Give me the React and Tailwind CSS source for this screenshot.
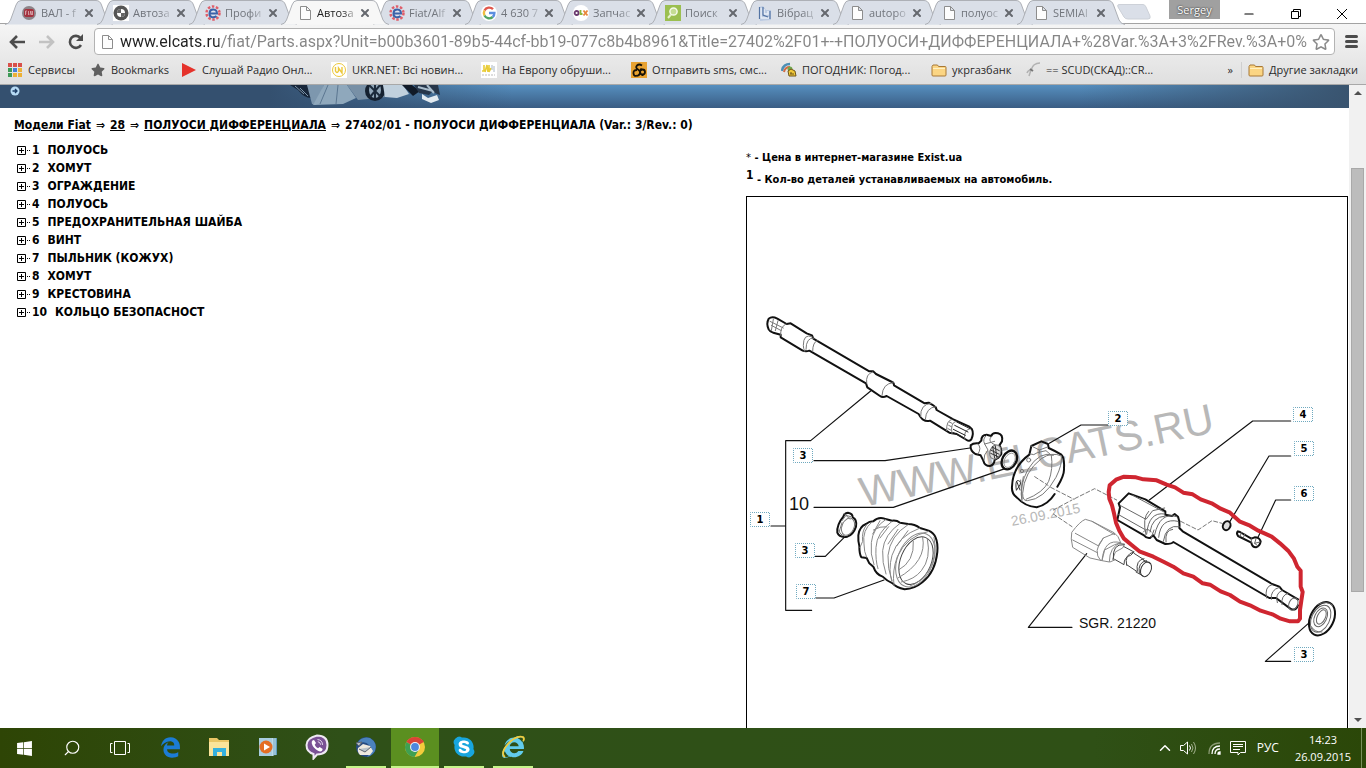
import React from 'react';
import { X, Minus, Search, ChevronUp } from 'lucide-react';
import { FaStar, FaRegStar, FaSkype, FaWindows, FaEdgeLegacy, FaInternetExplorer } from 'react-icons/fa';

const PageIcon = () => (
  <svg viewBox="0 0 16 16" className="size-4 shrink-0" fill="#fdfdfd" stroke="#8d8d8d">
    <path d="M3.500 1.500h6l4 4v9h-10zM9.500 1.500v4h4" />
  </svg>
);

const FiatIcon = () => (
  <svg viewBox="0 0 16 16" className="size-4 shrink-0">
    <circle cx="8" cy="8" r="7" fill="#8c8489" />
    <rect x="3" y="4" width="10" height="8" rx="2" fill="#a4323f" />
    <path d="M4.500 6v4M4.500 6h1.500M4.500 8h1M7.500 6v4M9 10l.8-4 .8 4M11.500 6v4" stroke="#e5c5c8" strokeWidth=".7" fill="none" />
  </svg>
);

const WheelIcon = () => (
  <svg viewBox="0 0 16 16" className="size-4 shrink-0">
    <rect width="16" height="16" fill="#fff" />
    <circle cx="8" cy="8" r="7.500" fill="#555" />
    <circle cx="8" cy="8" r="4" fill="#fff" />
    <path d="M8 8V4a4 4 0 0 0-4 4zM8 8v4a4 4 0 0 0 4-4z" fill="#666" />
  </svg>
);

const ExistIcon = () => (
  <svg viewBox="0 0 16 16" className="size-4 shrink-0" fill="none">
    <circle cx="8" cy="8" r="6.500" stroke="#df5e6a" strokeWidth="2.500" strokeDasharray="2.500 1.600" />
    <circle cx="8" cy="8" r="5" fill="#dfe3ee" />
    <path d="M4 8.500h8C12 3.500 5 3 4.500 8s4.500 5 7 3" stroke="#3a62a8" strokeWidth="2" />
  </svg>
);

const GoogleIcon = () => (
  <svg viewBox="0 0 16 16" className="size-4 shrink-0" fill="none" strokeWidth="2.400">
    <circle cx="8" cy="8" r="8" fill="#fff" />
    <path d="M12 4.200A5.300 5.300 0 0 0 3.500 5.500" stroke="#e0574c" />
    <path d="M3.500 5.500a5.300 5.300 0 0 0 0 5" stroke="#efbd41" />
    <path d="M3.500 10.500a5.300 5.300 0 0 0 8.200 1.500" stroke="#51a465" />
    <path d="M11.700 12a5.300 5.300 0 0 0 1.700-4H8" stroke="#5b8ee0" />
  </svg>
);

const OlxIcon = () => (
  <svg viewBox="0 0 16 16" className="size-4 shrink-0" fill="none" strokeWidth="1.800">
    <circle cx="8" cy="8" r="8" fill="#fff" />
    <circle cx="3.600" cy="8" r="2" stroke="#6b3b70" />
    <path d="M7.500 5v4h2" stroke="#8bb53c" />
    <path d="M10.500 5.500l4 5M14.500 5.500l-4 5" stroke="#e8853a" />
  </svg>
);

const FindIcon = () => (
  <svg viewBox="0 0 16 16" className="size-4 shrink-0">
    <rect width="16" height="16" fill="#9bbf50" />
    <circle cx="8.500" cy="6.500" r="3.600" fill="#c5dc93" stroke="#f5faea" strokeWidth="1.500" />
    <path d="M6 9.500L3 13" stroke="#e6f1cd" strokeWidth="2" />
  </svg>
);

const ForumIcon = () => (
  <svg viewBox="0 0 16 16" className="size-4 shrink-0">
    <path d="M2 2l4-1 3 4h5v10l-11 1z" fill="#bccbe2" />
    <path d="M4 3v10h8M7 4v5h4V6" stroke="#e9eff7" strokeWidth="1.500" fill="none" />
    <path d="M2.500 2v12M6 2v8l5 2M13 6v8" stroke="#5474a4" strokeWidth="1.200" fill="none" />
  </svg>
);

const FolderIcon = () => (
  <svg viewBox="0 0 16 16" className="size-4 shrink-0">
    <path d="M1 4.500L2 3h4.500l1 1.500h6.500q1 0 1 1v7.500q0 1-1 1H2q-1 0-1-1z" fill="#fbd583" stroke="#a87836" />
    <path d="M2 6.500h12" stroke="#fff0c2" />
  </svg>
);

const AppsIcon = () => (
  <svg viewBox="0 0 16 16" className="size-4 shrink-0">
    {['#d8504a', '#d8504a', '#d8504a', '#3f9a57', '#4580d6', '#edb136', '#3f9a57', '#edb136', '#edb136'].map((c, i) => (
      <rect key={i} x={(i % 3) * 5 + 1} y={Math.floor(i / 3) * 5 + 1} width="4" height="4" fill={c} />
    ))}
  </svg>
);

const tabs = [
  { title: 'ВАЛ - f', icon: <FiatIcon /> },
  { title: 'Автоза', icon: <WheelIcon /> },
  { title: 'Профи', icon: <ExistIcon /> },
  { title: 'Автоза', icon: <PageIcon />, active: true },
  { title: 'Fiat/Alf', icon: <ExistIcon /> },
  { title: '4 630 7', icon: <GoogleIcon /> },
  { title: 'Запчас', icon: <OlxIcon /> },
  { title: 'Поиск', icon: <FindIcon /> },
  { title: 'Вібрац', icon: <ForumIcon /> },
  { title: 'autopo', icon: <PageIcon /> },
  { title: 'полуос', icon: <PageIcon /> },
  { title: 'SEMIAl', icon: <PageIcon /> },
];

const Tab = ({ title, icon, active }) => (
  <div className={`relative -mr-4 h-[25px] w-[108px] shrink-0 ${active ? 'z-10' : ''}`}>
    <svg viewBox="0 0 108 25" className="absolute inset-0 h-full w-full">
      <path
        d="M0 24.500Q4 24 5.500 20L11 5Q12.500.5 16 .5H91Q95 .5 96.500 5L102 20Q104 24 108 24.500"
        fill={active ? '#f7f7f7' : '#dadfe8'}
        stroke="#adb0b6"
      />
    </svg>
    <div className="relative flex h-[25px] items-center pl-4">
      {icon}
      <button
        className={`ml-1 w-[42px] text-left text-[11px] leading-5 whitespace-nowrap [mask-image:linear-gradient(to_right,black_60%,transparent)] ${active ? 'text-[#222]' : 'text-[#70747b]'}`}
      >
        {title}
      </button>
      <button aria-label="Закрыть вкладку">
        <X size={12} strokeWidth={4} color="#66696f" />
      </button>
    </div>
  </div>
);

const TabStrip = () => (
  <div className="flex h-[24px] border-b border-[#a3a3a3] bg-white pl-[5px]">
    {tabs.map((tab, i) => (
      <Tab key={i} {...tab} />
    ))}
    <button aria-label="Новая вкладка" className="ml-2 h-6 shrink-0">
      <svg viewBox="0 0 34 18" className="h-[18px] w-[34px]">
        <path d="M2 1.500H26Q28 1.500 29 4l4 9q1 3-2 3H11q-3 0-4-2L1 4Q0 1.500 2 1.500z" fill="#dadfe8" stroke="#cdd1d8" />
      </svg>
    </button>
    <div className="ml-auto flex">
      <button className="mr-[22px] h-[19px] w-[51px] bg-[#a0a0a0] text-[11px] leading-4 text-white [text-shadow:0_0_2px_black]">Sergey</button>
      <button aria-label="Свернуть" className="mr-[34px] pt-1">
        <Minus size={14} strokeWidth={2} color="#000" />
      </button>
      <button aria-label="Восстановить" className="mr-[34px] pt-1">
        <svg viewBox="0 0 12 12" className="size-3" fill="none" stroke="#000">
          <path d="M1.500 3.500h7v7h-7zM3.500 3.500v-2h7v7h-2" />
        </svg>
      </button>
      <button aria-label="Закрыть" className="mr-[18px] pt-1">
        <svg viewBox="0 0 12 12" className="size-3" stroke="#000">
          <path d="M1 1l10 10M11 1L1 11" />
        </svg>
      </button>
    </div>
  </div>
);

const Toolbar = () => (
  <div className="flex h-[35px] items-center pr-2 pl-2">
    <button aria-label="Назад" className="mr-[12px]">
      <svg viewBox="0 0 18 16" className="h-4 w-[18px]" fill="none" stroke="#4c4c4c" strokeWidth="2.600">
        <path d="M17 8H3M9 2L3 8l6 6" />
      </svg>
    </button>
    <button aria-label="Вперёд" className="mr-[12px]">
      <svg viewBox="0 0 18 16" className="h-4 w-[18px]" fill="none" stroke="#c2c2c2" strokeWidth="2.600">
        <path d="M1 8h14M9 2l6 6-6 6" />
      </svg>
    </button>
    <button aria-label="Обновить" className="mr-[10px]">
      <svg viewBox="0 0 16 16" className="size-4" fill="none" stroke="#4c4c4c" strokeWidth="2.600">
        <path d="M13 11A6 6 0 1 1 12.500 4" />
        <path d="M15 0v7H8z" fill="#4c4c4c" stroke="none" />
      </svg>
    </button>
    <div className="flex h-[27px] min-w-0 flex-1 items-center rounded-sm border border-[#b3b3b3] bg-white pr-1 pl-1">
      <PageIcon />
      <input
        aria-label="Адрес"
        readOnly
        className="ml-[5px] min-w-0 flex-1 bg-[linear-gradient(to_right,#222_99px,#858585_99px)] bg-clip-text font-['Roboto','Open_Sans',sans-serif] text-base text-transparent outline-none"
        defaultValue="www.elcats.ru/fiat/Parts.aspx?Unit=b00b3601-89b5-44cf-bb19-077c8b4b8961&Title=27402%2F01+-+ПОЛУОСИ+ДИФФЕРЕНЦИАЛА+%28Var.%3A+3%2FRev.%3A+0%"
      />
      <button aria-label="В закладки">
        <FaRegStar size={18} color="#8a8a8a" />
      </button>
    </div>
    <button aria-label="Меню" className="ml-[10px] flex w-[13px] flex-col gap-[2px]">
      <span className="h-[3px] rounded-sm bg-[#4c4c4c]" />
      <span className="h-[3px] rounded-sm bg-[#4c4c4c]" />
      <span className="h-[3px] rounded-sm bg-[#4c4c4c]" />
    </button>
  </div>
);

const bookmarks = [
  { title: 'Сервисы', width: 'w-[83px]', icon: <AppsIcon /> },
  { title: 'Bookmarks', width: 'w-[91px]', icon: <FaStar size={14} color="#606060" className="mx-px shrink-0" /> },
  {
    title: 'Слушай Радио Онл...',
    width: 'w-[150px]',
    icon: (
      <svg viewBox="0 0 16 16" className="size-4 shrink-0">
        <path d="M1 1l14 7-14 7z" fill="#e5322b" />
      </svg>
    ),
  },
  {
    title: 'UKR.NET: Всі новин...',
    width: 'w-[150px]',
    icon: (
      <svg viewBox="0 0 16 16" className="size-4 shrink-0" fill="none" stroke="#ecc83c">
        <rect width="16" height="16" fill="#fff" stroke="none" />
        <circle cx="8" cy="8" r="6.500" />
        <path d="M4.500 5v4q1.500 3 3 0V6l3.500 5V5" strokeWidth="1.400" />
      </svg>
    ),
  },
  {
    title: 'На Европу обруши...',
    width: 'w-[150px]',
    icon: (
      <svg viewBox="0 0 16 16" className="size-4 shrink-0" fill="none" stroke="#e9cc36" strokeWidth="1.600">
        <rect width="16" height="16" fill="#fff" stroke="none" />
        <path d="M1 9h2V3M4 10l2-7 1 7M8 3v7l2-4" />
        <path d="M11 3v5M13 4v6" stroke="#a6b5c4" strokeWidth="1" />
        <path d="M1 13h13" stroke="#bbb" strokeDasharray="2 1" strokeWidth="1" />
      </svg>
    ),
  },
  {
    title: 'Отправить sms, смс...',
    width: 'w-[150px]',
    icon: (
      <svg viewBox="0 0 16 16" className="size-4 shrink-0" fill="none" stroke="#171208" strokeWidth="1.800">
        <rect width="16" height="16" fill="#e8a231" stroke="none" />
        <path d="M11 3.500Q8 1.500 6 3.500t1 4 2 4-3 2.500M6 8Q2 8 2.500 11.500T6 13.500" />
        <circle cx="11.500" cy="10" r="2.500" />
        <path d="M9 7.500h2M11.500 12.500v1.500" />
      </svg>
    ),
  },
  {
    title: 'ПОГОДНИК: Погод...',
    width: 'w-[150px]',
    icon: (
      <svg viewBox="0 0 16 16" className="size-4 shrink-0" fill="none">
        <path d="M1 9Q2 2 9 2" stroke="#4d8fb5" strokeWidth="2.500" />
        <path d="M3 10q1-5 6-5" stroke="#d36a43" strokeWidth="2" />
        <circle cx="9" cy="7" r="2.500" fill="#70a84e" />
        <path d="M7 9l3-2 4 2 1 5H8z" fill="#f0c738" stroke="#6d541a" />
        <path d="M9 12h4M10 10v2" stroke="#6d541a" />
      </svg>
    ),
  },
  { title: 'укргазбанк', width: 'w-[94px]', icon: <FolderIcon /> },
  {
    title: '== SCUD(СКАД)::CR...',
    width: 'w-[150px]',
    icon: (
      <svg viewBox="0 0 16 16" className="size-4 shrink-0" fill="none" stroke="#b2b2b2" strokeWidth="1.500">
        <path d="M15 1Q8 1 6 8q-3 0-4 3M6 8l-2 6" />
        <path d="M5 7l3 2" stroke="#777" strokeWidth="2" />
      </svg>
    ),
  },
];

const BookmarksBar = () => (
  <div className="flex h-[26px] items-center border-b border-[#a8a8a8] pb-[3px] pl-[7px] text-[11px] text-[#2b2b2b]">
    {bookmarks.map(({ title, width, icon }) => (
      <button key={title} className={`flex shrink-0 items-center gap-[5px] whitespace-nowrap ${width}`}>
        {icon}
        {title}
      </button>
    ))}
    <button className="ml-auto border-r border-[#cfcfcf] px-2" aria-label="Ещё закладки">»</button>
    <button className="mr-2 ml-[6px] flex items-center gap-[5px] whitespace-nowrap">
      <FolderIcon />
      Другие закладки
    </button>
  </div>
);

const Banner = () => (
  <div className="flex h-[23px] bg-[linear-gradient(to_right,#34506f_20%,transparent_38%,transparent_80%,#39546f),linear-gradient(to_bottom,#568fbf,#3a5d84)] pl-[10px]">
    <svg viewBox="0 0 10 10" className="mt-[1px] size-[10px] shrink-0">
      <circle cx="5" cy="5" r="4.500" fill="#b6daf4" />
      <path d="M2.500 5h4.500M5 3l2 2-2 2" stroke="#1c3d66" fill="none" strokeWidth="1.300" />
    </svg>
    {/* car parts, cut off by the top of the viewport */}
    <svg viewBox="290 85 152 23" className="ml-[270px] h-[23px] w-[152px] shrink-0">
      <path d="M290 85h18l3 13q-7 0-13-8z" fill="#17263a" />
      <path d="M300 88l8 8M295 86l9 8" stroke="#7d95ab" />
      <path d="M307 85h17l-8 20-4-1z" fill="#7d97ae" />
      <path d="M324 85h23l9 13-13 6-30 1z" fill="#8fa8bc" />
      <path d="M328 85l-8 19M338 85l-2 19" stroke="#5b7690" />
      <path d="M347 85h48l6 10-23 3-20 2z" fill="#7890a6" />
      <ellipse cx="375" cy="91" rx="10" ry="10" fill="#152130" />
      <ellipse cx="375" cy="90" rx="6" ry="8" fill="#91a7b9" />
      <path d="M369 85l12 12M380 85l-10 12M375 84v14" stroke="#1c2b3c" strokeWidth="2" />
      <path d="M383 85h20l6 9-12 4-12-1z" fill="#c0d0dd" />
      <path d="M402 85h10l8 6-7 5z" fill="#101a28" />
      <path d="M414 85h24l2 10-8-3-3 3-10-2z" fill="#26364a" />
      <path d="M422 94l6 4 9-3 2 5-8 3-9-4z" fill="#e2eaf0" />
      <path d="M418 87l15 4M427 85l7 8" stroke="#a8bccc" strokeWidth="2" />
    </svg>
  </div>
);

const parts = [
  ['1', 'ПОЛУОСЬ'],
  ['2', 'ХОМУТ'],
  ['3', 'ОГРАЖДЕНИЕ'],
  ['4', 'ПОЛУОСЬ'],
  ['5', 'ПРЕДОХРАНИТЕЛЬНАЯ ШАЙБА'],
  ['6', 'ВИНТ'],
  ['7', 'ПЫЛЬНИК (КОЖУХ)'],
  ['8', 'ХОМУТ'],
  ['9', 'КРЕСТОВИНА'],
  ['10', 'КОЛЬЦО БЕЗОПАСНОСТ'],
];

const PartsTree = () => (
  <ul className="mt-[7px] ml-[17px]">
    {parts.map(([num, name]) => (
      <li key={num}>
        <button className="flex h-[18px] items-center font-bold">
          <svg viewBox="0 0 15 9" className="h-[9px] w-[15px]" fill="none" stroke="#000">
            <path d="M.5.5h8v8h-8zM2 4.500h5M4.500 2v5" />
            <path d="M10 4.500h4" strokeDasharray="1 1" />
          </svg>
          <span className="mr-2">{num}</span>
          <span>{name}</span>
        </button>
      </li>
    ))}
  </ul>
);

const callouts = [
  { n: '1', x: 750, y: 512 },
  { n: '3', x: 793, y: 448 },
  { n: '3', x: 795, y: 543 },
  { n: '7', x: 796, y: 584 },
  { n: '2', x: 1108, y: 411 },
  { n: '4', x: 1293, y: 407 },
  { n: '5', x: 1294, y: 441 },
  { n: '6', x: 1294, y: 486 },
  { n: '3', x: 1294, y: 647 },
];

const Diagram = () => (
  <svg viewBox="747 197 600 531" className="block w-full" fill="none" stroke="#111" strokeLinejoin="round" strokeLinecap="round">
    {/* watermark */}
    <g fill="#b8b8b8" stroke="none" fontWeight="400" fontFamily="Liberation Sans, Arial, sans-serif">
      <text x="863" y="507" fontSize="42" transform="rotate(-12 863 507)">WWW.ELCATS.RU</text>
      <text x="1012" y="526" fontSize="14" transform="rotate(-11 1012 526)">26.09.2015</text>
    </g>

    <g transform="translate(740 300) scale(.33333)" strokeWidth="4">
      {/* leader lines */}
      <g strokeWidth="3.500">
        <path d="M215 931H137V422H212L392 273M93 678H137" />
        <path d="M222 482H435L690 444M222 622H460L795 506M226 769H256L312 713M228 894H282L432 840" />
      </g>

      {/* long shaft */}
      <path
        strokeWidth="6"
        d="M122 104v8L188 152Q198 156 208 152L378 250l4 12 38 26Q428 294 440 288l96 54Q540 352 548 358 560 366 570 362l58 36 22 4 30 18Q688 426 694 418 702 400 696 388l-8-8-48-22-50-28Q588 320 580 316l-14-8-12 2-92-54Q462 248 456 246l-48-24-8-8H388L220 116l-4-10-16-6-48-30-12 2-28-16Q96 48 86 56 78 70 86 88 90 96 100 98z"
      />
      <g stroke="#777" strokeWidth="3">
        <path d="M216 110Q190 100 190 136q0 10 4 18M222 114Q198 112 198 148M232 122Q218 126 218 154" />
        <path d="M398 216Q376 222 380 250M460 248Q428 250 426 286M574 310Q540 312 542 350M588 320Q558 322 556 358" />
        <path d="M100 58l-6 34M114 62l-8 30M90 64l40 20M94 76l30 16M138 72q-18 8-16 34" />
        <path d="M636 358q-18 4-16 34M648 364q-18 4-12 38M628 366l8 4M626 376l8 4M624 386l8 4M690 386q-20 4-16 32" />
        <path d="M650 366l40 20M644 376l40 20M640 388l36 18M640 398l32 16" stroke="#222" />
      </g>

      {/* cross joint */}
      <path
        strokeWidth="6"
        d="M692 436Q700 428 716 430L724 422Q724 404 740 404L754 408Q758 396 774 400 790 404 786 424L778 436Q784 442 784 462L774 474 764 480Q762 496 750 498 734 498 730 482L722 466 706 462Q690 452 692 436z"
      />
      <g stroke="#777" strokeWidth="3">
        <path d="M714 432q12 12 0 30M740 406q-14 10-6 26l10 18q-14 14-12 30M754 410q-10 10 2 20l18 8M734 432l30-8" />
        <ellipse cx="766" cy="456" rx="16" ry="22" transform="rotate(22 766 456)" fill="#ddd" />
        <path d="M758 440l6 34M766 438l4 34M752 450l24 12M752 460l22 10M758 442l20 10" stroke="#333" />
      </g>

      {/* snap ring */}
      <ellipse cx="808" cy="480" rx="21" ry="30" transform="rotate(28 808 480)" strokeWidth="7" />
      <ellipse cx="809" cy="481" rx="15" ry="23" transform="rotate(28 809 481)" stroke="#777" strokeWidth="2" />

      {/* small clamp */}
      <path strokeWidth="6" d="M310 650q2-10 14-12 14 2 14 14 14 6 10 28-8 24-26 30-24 4-30-12-2-24 18-48z" />
      <g stroke="#777" strokeWidth="3">
        <ellipse cx="324" cy="680" rx="18" ry="27" transform="rotate(24 324 680)" />
        <path d="M306 662l12-16 14 4M296 690q4 16 18 18M312 640l18 18M306 668l-8 26" />
      </g>

      {/* rubber boot */}
      <path
        strokeWidth="6"
        d="M355 706Q358 680 378 672 388 664 400 664 414 650 434 656l22 6q14-2 24 6l24 4q20 0 36 12l26 8q30 12 26 64-6 60-44 90-24 20-54 22-26-6-36-18-16-6-30-20-20-6-28-30l-12-10-8-16-16-2Q358 762 358 738 354 726 355 706z"
      />
      <g stroke="#888" strokeWidth="3">
        <path d="M380 674q-16 20-12 50l-8 18M396 666q-30 24-24 66 0 24 8 40M438 658q-40 26-44 70-4 34 8 66M456 664q-46 34-48 78-2 40 6 64M480 670q-48 34-52 82-2 36 10 70M504 674q-54 34-60 92-2 40 12 76M540 684q-66 24-84 82-12 44 0 80" />
        <path d="M566 694q-66 14-94 76-16 42-10 86M420 662l-22 40M446 680l-26 34M474 688l-30 44M504 692l-34 46M400 690q20-12 40-10" />
        <ellipse cx="526" cy="780" rx="53" ry="85" transform="rotate(23 526 780)" />
        <ellipse cx="528" cy="782" rx="46" ry="75" transform="rotate(23 528 782)" stroke="#444" />
        <path d="M520 724q4 60-44 86M548 712q14 72-74 122M562 716q12 60-18 96-20 26-60 34" />
        <path d="M582 712q12 54-16 100-24 36-56 46" />
      </g>
    </g>

    <g transform="translate(1010 380) scale(.33333)" strokeWidth="4">
      <g strokeWidth="3.500">
        <path d="M293 135H213L118 190M842 123H728L418 360M842 228H777L660 424M842 360H797L744 472" />
        <path d="M230 521L55 742H186M842 844H766L898 728" />
      </g>

      {/* large clamp */}
      <path
        strokeWidth="6"
        d="M142 320q22-36 20-56 2-30-8-40-16-10-38-20l-2-12-20-8-30 14-6 26Q8 260 6 320q-2 20 14 32 26 28 60 30 34-8 54-40"
      />
      <g stroke="#777" strokeWidth="3">
        <path d="M60 222q12 6 22-4l26-6 14 12M64 198l24 12 22-8M88 210v10M130 226Q90 210 54 268 26 320 36 364" />
        <path d="M154 228q-28-14-60 8-52 40-56 104 0 24 14 22 50-4 86-70 20-40 16-64M124 226q6 40-8 78-16 34-68 54M40 290q-8 40-4 68M32 300l4 54" />
        <circle cx="56" cy="240" r="6" />
        <circle cx="36" cy="273" r="5" />
        <path d="M18 322q-2-24 8-20t2 16-8 12zM20 304l10 26" stroke="#333" />
        <path d="M74 290l40 26M122 322l70 36M130 390l56-30M130 402l56 38M194 356l60-30 66 34M512 424l52 26 42-28 30 8" strokeDasharray="12 7" />
      </g>

      {/* short joint */}
      <g stroke="#888" strokeWidth="3">
        <path d="M186 456q24-32 40-38l20 6 66 34 12 12 8 18-18 6-30 16-8 32-36-8-52-32-4-24z" />
        <path d="M196 460l70 38 14-24 34-14M246 424l68 40M188 480l74 38M280 474q-34 40-8 68M332 488q-50-14-56 54l22 4q0-46 34-58zM300 546l14-6M328 490l16 2-6 12-22 12-8 22" />
        <path d="M342 494q-36-4-32 44M342 500l30 16-10 10q-20 4-20 28l-28-16M372 516q-30 6-22 40M372 520l28 18M350 554l30 20M402 536q-26 4-20 38M410 542q-28 4-22 38M420 550l-20-10M400 588l-22-12" stroke="#444" />
        <ellipse cx="408" cy="568" rx="15" ry="23" transform="rotate(24 408 568)" stroke="#333" />
      </g>

      {/* right half shaft */}
      <path
        strokeWidth="6"
        d="M322 420l8-38-4-12 30-30 50 18 60 36v10l20 4 8-6 10 8q6 16 4 34l10 10L786 612l22 8 8 10 48 28M322 420l80 46q8 10 18 8l10-8 10 14 26 12q20 0 24-6L778 654h20l46 34q14 4 20-12"
      />
      <g stroke="#666" strokeWidth="3">
        <path d="M330 376l78 42 20-26 36-8M368 346l94 50M326 404l78 44M416 394q-20 20-8 70M464 402q-48-8-54 60" />
        <path d="M500 410q-50-16-66 54M504 424q-52-12-58 48M508 440q-40-8-48 44M488 448q-24 2-20 38M466 408q-40 2-46 48M432 450l-8 22M400 456q12-16 24 0" />
        <path d="M786 614q-24 6-16 40M808 622q-28 8-24 36M816 632q-22 8-14 36M834 640q-22 6-18 34" />
        <ellipse cx="850" cy="672" rx="13" ry="19" transform="rotate(24 850 672)" />
      </g>

      {/* washer */}
      <ellipse cx="650" cy="437" rx="11" ry="14" transform="rotate(24 650 437)" strokeWidth="6" fill="#ddd" />

      {/* bolt */}
      <path strokeWidth="6" d="M684 454q-6 6 0 14l40 20q2 14 14 14 12-4 14-18-4-12-18-12l-10 4-34-20z" />
      <path stroke="#666" strokeWidth="3" d="M694 458l-4 12M704 462l-4 12M738 476l-4 14 10 8M724 476v12M734 490l16-4" />

      {/* oil seal */}
      <ellipse cx="936" cy="716" rx="35" ry="53" transform="rotate(26 936 716)" strokeWidth="6" />
      <g stroke="#666" strokeWidth="3">
        <ellipse cx="932" cy="716" rx="27" ry="43" transform="rotate(26 932 716)" />
        <ellipse cx="932" cy="712" rx="18" ry="30" transform="rotate(26 932 712)" />
        <ellipse cx="934" cy="711" rx="12" ry="23" transform="rotate(26 934 711)" />
        <path d="M922 674q30-14 46 2M904 740q10 18 32 16" />
      </g>

      {/* hand drawn marker */}
      <path
        stroke="#cf2630"
        strokeWidth="12"
        d="M318 299L342 290 378 292 400 298 440 301 470 314 495 322 520 338 548 343 572 358 605 370 632 386 660 398 690 425 720 437 745 452 785 470 810 490 836 514 852 536 862 560 872 572 872 620 878 636 874 662 870 690 870 716 864 724 840 724 812 716 790 704 752 692 720 676 690 665 660 645 632 634 600 614 578 610 550 590 520 580 490 560 462 546 430 530 388 514 364 494 342 476 328 452 318 428 312 400 306 376 298 356 296 336 299 316 318 299z"
      />
    </g>

    <g fill="#111" stroke="none" fontWeight="400" fontFamily="Liberation Sans, Arial, sans-serif">
      <text x="789" y="510" fontSize="18">10</text>
      <text x="1079" y="628" fontSize="14">SGR. 21220</text>
    </g>

    {callouts.map(({ n, x, y }) => (
      <a key={`${x}-${y}`} href="#part">
        <rect x={x + 0.5} y={y + 0.5} width="19" height="14" fill="#fff" stroke="#6fa9bf" strokeDasharray="1 1" strokeDashoffset="0.5" strokeLinecap="butt" />
        <text x={x + 10} y={y + 11} textAnchor="middle" fontSize="10" fontWeight="700" fontFamily="DejaVu Sans, Verdana, sans-serif" fill="#000" stroke="none">
          {n}
        </text>
      </a>
    ))}
  </svg>
);

const Scrollbar = () => (
  <div className="flex w-[17px] shrink-0 flex-col items-center bg-[#f1f1f1] py-[6px]">
    <svg viewBox="0 0 8 4" className="h-1 w-2">
      <path d="M0 4l4-4 4 4z" fill="#505050" />
    </svg>
    <div className="mt-[73px] mb-[126px] w-[13px] flex-1 border border-[#a9a9a9] bg-[#bcbcbc]" />
    <svg viewBox="0 0 8 4" className="h-1 w-2">
      <path d="M0 0l4 4 4-4z" fill="#505050" />
    </svg>
  </div>
);

const PartsPage = () => (
  <div className="flex min-h-0 flex-1">
    <div className="flex min-w-0 flex-1 flex-col bg-white font-['DejaVu_Sans_Condensed','DejaVu_Sans',Tahoma,sans-serif] text-xs font-bold text-black">
      <Banner />
      <div className="flex min-h-0 flex-1 overflow-hidden pr-px">
        <div className="min-w-0 flex-1 pt-2">
          <nav className="ml-[14px] flex h-[18px] items-center gap-[5px] whitespace-nowrap">
            <a href="#fiat" className="underline">Модели Fiat</a>
            <span>⇒</span>
            <a href="#28" className="underline">28</a>
            <span>⇒</span>
            <a href="#axles" className="underline">ПОЛУОСИ ДИФФЕРЕНЦИАЛА</a>
            <span>⇒</span>
            <span>27402/01 - ПОЛУОСИ ДИФФЕРЕНЦИАЛА (Var.: 3/Rev.: 0)</span>
          </nav>
          <PartsTree />
        </div>
        <div className="w-[602px] shrink-0 pt-10 text-[11px]">
          <p className="h-5 leading-5"><span className="font-normal">*</span> - Цена в интернет-магазине Exist.ua</p>
          <p className="mb-1 h-6 leading-6">
            <span className="align-[4px] text-xs leading-3">1</span> - Кол-во деталей устанавливаемых на автомобиль.
          </p>
          <div className="border border-black">
            <Diagram />
          </div>
        </div>
      </div>
    </div>
    <Scrollbar />
  </div>
);

const apps = [
  {
    name: 'Edge',
    icon: <FaEdgeLegacy size={21} color="#1c7cd5" />,
  },
  {
    name: 'Проводник',
    icon: (
      <svg viewBox="0 0 22 22" className="size-[22px]">
        <path d="M1 2h8l2 2h10v16H1z" fill="#eac665" />
        <path d="M1 6h20v14H1z" fill="#fbe49a" />
        <path d="M5 20v-8h13v8h-4v-4H9v4z" fill="#35b1de" />
      </svg>
    ),
  },
  {
    name: 'Проигрыватель',
    icon: (
      <svg viewBox="0 0 22 22" className="size-[22px]">
        <path d="M7 3l13-1v17l-13 1z" fill="#5e9cbd" />
        <path d="M2 2h14v18H2z" fill="#a9cde0" />
        <path d="M16 2v18M18 2v17" stroke="#d2e6ef" />
        <circle cx="9" cy="11" r="6.500" fill="#e46e24" />
        <path d="M7 7.500l6 3.500-6 3.500z" fill="#fff" />
      </svg>
    ),
  },
  {
    name: 'Viber',
    icon: (
      <svg viewBox="0 0 24 26" className="h-[26px] w-6" fill="none">
        <path d="M12 1.500Q22.500 1.500 22.500 11T12 20.500l-3.500 4v-4.500Q1.500 18 1.500 11T12 1.500z" fill="#7a5195" stroke="#efe9f3" strokeWidth="2" />
        <path d="M7.500 6.500L9 6l2 3-1.300 1.700q1 2.500 3.300 3.600l1.700-1.300 3 2-.7 1.700q-1.500 1.500-4 0Q8 14 6.800 9.500q-.4-2 .7-3z" fill="#fff" />
        <path d="M12.500 5.500q5 .5 5 5.500M12.800 7.700q2.600.3 2.800 3" stroke="#e3d7ec" />
      </svg>
    ),
  },
  {
    name: 'Thunderbird',
    running: true,
    icon: (
      <svg viewBox="0 0 24 24" className="size-6">
        <circle cx="12" cy="12" r="10" fill="#274a80" />
        <path d="M3 9Q7 1 16 3q8 5 5 13-3 5-8 6 6-7 2-12T3 9z" fill="#4b82bd" />
        <path d="M4 13l5-4 7 2 3 5-3 4H6q-3-3-2-7z" fill="#eee9df" />
        <path d="M5 14l6 3 6-5M2 8l6-1-3 4z" stroke="#5f6570" fill="#b9c2ca" />
      </svg>
    ),
  },
  {
    name: 'Chrome',
    running: true,
    active: true,
    icon: (
      <svg viewBox="0 0 22 22" className="size-[22px]">
        <circle cx="11" cy="11" r="10" fill="#f4cc3c" />
        <path d="M11 11L2.300 6A10 10 0 0 1 19.700 6z" fill="#da4437" />
        <path d="M11 11L2.300 6A10 10 0 0 0 10.500 21l5-8.500z" fill="#3fa052" />
        <path d="M11 6h8.700l-1-2H5z" fill="#da4437" />
        <circle cx="11" cy="11" r="5" fill="#f2f2f2" />
        <circle cx="11" cy="11" r="3.900" fill="#4c88dc" />
      </svg>
    ),
  },
  {
    name: 'Skype',
    running: true,
    icon: <FaSkype size={24} color="#18a6de" className="rounded-full bg-[radial-gradient(white_50%,transparent_52%)]" />,
  },
  {
    name: 'Internet Explorer',
    running: true,
    icon: (
      <svg viewBox="0 0 24 24" className="size-6" fill="none">
        <FaInternetExplorer size={22} x="1" y="1" color="#62ccec" />
        <path d="M4 22Q-1 18 7 9T22 2q2 2 0 4" stroke="#f0cc3d" strokeWidth="1.800" />
      </svg>
    ),
  },
];

const Taskbar = () => (
  <div className="flex h-10 shrink-0 bg-[linear-gradient(to_right,#2e4505,#2f5018_25%,#2f5016_80%,#2b4708)] text-white">
    <button aria-label="Пуск" className="flex w-12 items-center justify-center">
      <FaWindows size={17} />
    </button>
    <button aria-label="Поиск" className="flex w-12 items-center justify-center">
      <Search size={18} strokeWidth={1.500} className="-scale-x-100" />
    </button>
    <button aria-label="Представление задач" className="mr-[2px] flex w-12 items-center justify-center">
      <svg viewBox="0 0 20 16" className="h-4 w-5" fill="none" stroke="#fff">
        <path d="M4.500 1.500h11v13h-11zM2.500 3.500h-2v9h2M17.500 3.500h2v9h-2" />
      </svg>
    </button>
    <div className="flex gap-px">
      {apps.map(({ name, icon, running, active }) => (
        <button key={name} aria-label={name} className={`flex w-12 flex-col items-center ${active ? 'bg-[#5b8f20]' : ''}`}>
          <span className="flex flex-1 items-center">{icon}</span>
          <span className={`h-[2px] ${active ? 'w-full' : 'w-10'} ${running ? 'bg-[#c5f58a]' : ''}`} />
        </button>
      ))}
    </div>
    <div className="ml-auto flex items-center text-[11px]">
      <ChevronUp size={18} strokeWidth={2} className="mr-[6px]" />
      <svg viewBox="0 0 16 16" className="mr-[12px] size-4" fill="none" stroke="#fff">
        <path d="M.5 5.500h3l4-3.500v12l-4-3.500h-3zM9.500 5.500q2 2.500 0 5" />
        <path d="M11.500 4q3 4 0 8M13.500 2q4 6 0 12" stroke="#a3b18e" />
      </svg>
      <svg viewBox="0 0 14 14" className="mr-[8px] size-[14px]" fill="none" stroke="#fff" strokeWidth="1.300">
        <path d="M1 13Q1 2 12 2" stroke="#8b9b75" />
        <path d="M4 13Q4 5 12 5M7 13q0-5 5-5" />
        <path d="M10 13q0-2 2-2v2z" fill="#fff" />
      </svg>
      <svg viewBox="0 0 16 16" className="mr-[11px] size-4" fill="none" stroke="#fff">
        <path d="M.5 1.500h15v11h-5l-2.500 2.500v-2.500h-7.500zM3 4.500h10M3 6.500h10M3 9.500h7" />
      </svg>
      <button className="mr-[16px] text-xs">РУС</button>
      <div className="mr-[10px] text-center leading-[17px]">
        <div>14:23</div>
        <div>26.09.2015</div>
      </div>
      <div className="mr-1 h-full w-px bg-[#78905b]" />
    </div>
  </div>
);

export default function App() {
  return (
    <div className="flex h-screen flex-col overflow-hidden bg-white font-['Open_Sans','Noto_Sans',sans-serif]">
      <TabStrip />
      <div className="shrink-0 bg-linear-to-b from-[#f5f5f5] to-[#dfdfdf]">
        <Toolbar />
        <BookmarksBar />
      </div>
      <PartsPage />
      <Taskbar />
    </div>
  );
}
